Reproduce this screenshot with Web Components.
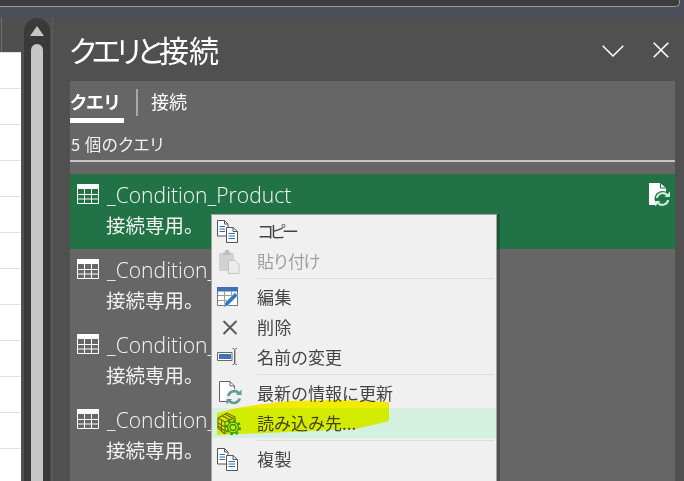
<!DOCTYPE html>
<html lang="ja"><head><meta charset="utf-8"><style>
html,body{margin:0;padding:0;background:#505050}
body{width:684px;height:481px;overflow:hidden;font-family:"Open Sans","Noto Sans CJK JP",sans-serif}
</style></head><body>
<x-app>
  <x-topbar></x-topbar>
  <x-main>
    <x-sheet></x-sheet>
    <x-scroll></x-scroll>
    <x-pane>
      <x-query active>_Condition_Product</x-query>
      <x-query>_Condition_</x-query>
      <x-query>_Condition_</x-query>
      <x-query>_Condition_</x-query>
    </x-pane>
  </x-main>
  <x-menu>
    <x-item icon="copy" style="letter-spacing:-4.500px">コピー</x-item>
    <x-item icon="paste" disabled style="letter-spacing:-1.500px">貼り付け</x-item>
    <x-sep></x-sep>
    <x-item icon="edit" style="letter-spacing:.500px">編集</x-item>
    <x-item icon="del" style="letter-spacing:.500px">削除</x-item>
    <x-item icon="rename">名前の変更</x-item>
    <x-sep></x-sep>
    <x-item icon="refresh">最新の情報に更新</x-item>
    <x-item icon="load" hover>読み込み先...</x-item>
    <x-sep></x-sep>
    <x-item icon="copy" style="letter-spacing:.500px">複製</x-item>
  </x-menu>
  <x-marker></x-marker>
</x-app>
<script>
const FONT='"Noto Sans CJK JP","Noto Sans",sans-serif';
function def(name,css,html,init){
  customElements.define(name,class extends HTMLElement{
    constructor(){super();const r=this.attachShadow({mode:'open'});
      r.innerHTML='<style>'+css+'</style>'+(typeof html==='function'?html(this):html);}
    connectedCallback(){if(init)init(this)}
  });
}
const ICONS={
 copy:`<svg width="21" height="23" viewBox="0 0 21 23" fill="none" style="margin-top:1px"><path d="M.5.5H7.500L11 4V16H.5Z" fill="#fff" stroke="#555"/><path d="M7.500 .5V4H11" stroke="#555"/><path d="M2.500 6.500H8M2.500 9H8M2.500 11.500H8" stroke="#2f6fb0"/><path d="M9.500 7.500H16L20.500 11.500V22.500H9.500Z" fill="#fff" stroke="#555"/><path d="M16 7.500V11.500H20.500" stroke="#555"/><path d="M11.500 13.500H18M11.500 16H18M11.500 18.500H18" stroke="#2f6fb0"/></svg>`,
 paste:`<svg width="22" height="24" viewBox="0 0 22 24" style="margin-left:1px;margin-top:1px"><path d="M1 3H16V21H1Z" fill="#d2d2d2"/><path d="M5 5V2.500H7V0H11V2.500H13V5Z" fill="#bdbdbd"/><path d="M10.500 10.500H17L21 14.500V23.500H10.500Z" fill="#ececec" stroke="#c4c4c4"/></svg>`,
 edit:`<svg width="22" height="22" viewBox="0 0 22 22" fill="none"><path d="M.5 1.500H20.500V19.500H.5Z" fill="#fff" stroke="#777"/><path d="M0 1H21V5.500H0Z" fill="#3f72ae"/><path d="M7.500 5V19M14.500 5V12M1 9.500H20M1 14.500H12" stroke="#999"/><path d="M6.500 21.500L8 16.500L18 6.500L21 9.500L11 19.500Z" fill="#2f78c4" stroke="#fff" stroke-width=".6"/></svg>`,
 del:`<svg width="16" height="15" viewBox="0 0 16 15" fill="none" style="margin-left:5px"><path d="M1.500 1L14.500 14M14.500 1L1.500 14" stroke="#5a5a5a" stroke-width="2"/></svg>`,
 rename:`<svg width="22" height="17" viewBox="0 0 22 17" fill="none" style="margin-top:-1px"><path d="M.5 4.500H15V12.500H.5Z" fill="#fff" stroke="#666"/><path d="M2 6H14V11H2Z" fill="#3f72ae"/><path d="M15.500 .5H17M20 .5H18.500M15.500 16.500H17M20 16.500H18.500" stroke="#666"/><path d="M17.750 1V16" stroke="#555" stroke-width="1.200"/></svg>`,
 refresh:`<svg width="23" height="24" viewBox="0 0 23 24" fill="none" style="margin-left:2px"><path d="M.5 .5H11L15.500 5V20.500H.5Z" fill="#fff" stroke="#666"/><path d="M11 .5V5H15.500" stroke="#666"/><circle cx="15" cy="16" r="8" fill="#f0f0f0"/><path d="M9.300 15A6 6 0 0 1 19.500 12M20.700 17.500A6 6 0 0 1 10.500 20" stroke="#5d9c94" stroke-width="2.600"/><path d="M17 14H22.500V8.500ZM13 18H7.500V23.500Z" fill="#5d9c94"/></svg>`,
 load:`<svg width="24" height="23" viewBox="0 0 24 23" fill="none"><path d="M1 6L10 1L18 5V9M1 6V16L8 22M1 6L8 10V22M8 10L17 6M1 11L8 15M1 14L8 19M5 3.500L13 8M8 2L16 6.500M4.500 8V19" stroke="#6b6a10" stroke-width="1.100"/><circle cx="16" cy="15.500" r="3" stroke="#2f9a2f" stroke-width="1.300"/><circle cx="16" cy="15.500" r="5.500" stroke="#2f9a2f" stroke-width="1.300"/><circle cx="16" cy="15.500" r="7" stroke="#2f9a2f" stroke-width="2" stroke-dasharray="2.600 2.900"/></svg>`
};
const TABLE=`<svg width="22" height="20" viewBox="0 0 22 20" fill="none" style="display:block"><path d="M0 0H22V5H0Z" fill="#fff"/><path d="M.5 .5H21.500V19.500H.5ZM.5 10.500H21.500M.5 15H21.500M7.500 5V19M14.500 5V19" stroke="#fff"/></svg>`;

def('x-app',`:host{display:block;position:relative;width:684px;height:481px;overflow:hidden;background:#505050;color:#fff;font-family:${FONT}}`,`<slot></slot>`);
def('x-topbar',`:host{display:block;height:18px;box-sizing:border-box;background:#4b4f59}
 div{height:6px;background:#3d3d3d;border-bottom:1px solid #9a9a9a;margin-right:4px;border-bottom-right-radius:5px;border-right:1px solid #9a9a9a}`,`<div></div>`);
def('x-main',`:host{display:flex;height:463px}`,`<slot></slot>`);
def('x-sheet',`:host{display:flex;flex-direction:column;width:21px;flex:none}
 .h{height:34px;background:#4f4f4f;border-left:1px solid #707070;margin-left:1px}
 .g{flex:1;background-color:#fff;background-image:repeating-linear-gradient(to bottom,#e2e2e2 0 1px,#fff 1px 36px)}`,`<div class="h"></div><div class="g"></div>`);
def('x-scroll',`:host{display:block;width:26px;flex:none;margin:0 2px 0 3px;background:#3a3a3a;border-radius:13px 13px 0 0;position:relative;padding-top:8px;box-sizing:content-box}
 .a{width:0;height:0;border:7px solid transparent;border-top:0;border-bottom:10px solid #c6c6c6;margin:0 auto}
 .t{width:12px;height:440px;margin:8px auto 0;background:#c6c6c6;border-radius:6px 6px 0 0}`,`<div class="a"></div><div class="t"></div>`);
def('x-pane',`:host{display:block;flex:1;min-width:0;border-left:1px solid #5e5e5e;padding:0 9px 0 17px;background:#505050}
 header{display:flex;align-items:center;height:63px}
 h1{margin:0;font:400 30px/1 ${FONT};color:#fff;flex:1;position:relative;top:-1px}
 h1 span{letter-spacing:-4.200px;font-feature-settings:"palt";margin-left:-1px}
 .btn{display:block;flex:none}
 .body{background:#666;height:400px}
 nav{display:flex;align-items:flex-start;height:42px}
 .tab{font:400 18px/1 ${FONT};font-feature-settings:"palt";padding-top:11px;height:37px;box-sizing:content-box}
 .on{font-weight:700;border-bottom:5px solid #fff;height:26px;width:54px;letter-spacing:.3px}
 .div{width:2px;height:27px;background:#a8a8a8;margin:8px 13px 0 12px}
 .count{font:400 16.500px/1 ${FONT};font-feature-settings:"palt";padding:13px 0 0 1px;height:24px;box-sizing:content-box;letter-spacing:.5px;color:#f2f2f2}
 hr{border:0;height:2px;background:#c6c6c6;margin:0 0 12px}`,
 `<header><h1><span>クエリと</span>接続</h1>
  <svg class="btn" width="22" height="12" viewBox="0 0 22 12" style="margin-right:29px;margin-top:3px"><path d="M.7 .7L11 11L21.300 .7" fill="none" stroke="#fff" stroke-width="1.500"/></svg>
  <svg class="btn" width="16" height="16" viewBox="0 0 16 16" style="margin-right:6px"><path d="M.7.7L15.300 15.300M15.300.7L.7 15.300" fill="none" stroke="#fff" stroke-width="1.600"/></svg>
 </header>
 <div class="body"><nav><div class="tab on">クエリ</div><div class="div"></div><div class="tab">接続</div></nav>
 <div class="count">5 個のクエリ</div><hr><slot></slot></div>`);
def('x-query',`:host{display:block;height:75px;position:relative;color:#fff}
 :host([active]){background:#217346}
 .l{display:flex;align-items:center;padding-left:7px;height:20px;padding-top:10px}
 .n{font:300 21.100px/1 "Open Sans",sans-serif;margin-left:8px;color:#f6f6f6;transform:translateY(1px)}
 .s{font:400 19.500px/1 ${FONT};margin:11px 0 0 36px;color:#f2f2f2}
 .d{display:none;position:absolute;right:5px;top:9px}
 :host([active]) .d{display:block}`,
 `<div class="l">${TABLE}<span class="n"><slot></slot></span></div><div class="s">接続専用。</div>
 <svg class="d" width="21" height="24" viewBox="0 0 21 24" fill="none"><path d="M0 0H11L17 5V22H0Z" fill="#fff"/><path d="M11.500 0V5H17" stroke="#217346"/><circle cx="13.500" cy="16" r="8" fill="#217346"/><path d="M7.800 15A6 6 0 0 1 18 12M19.200 17A6 6 0 0 1 9 20" stroke="#c9f0dc" stroke-width="2"/><path d="M15.500 14H21V8.500ZM11.500 18H6V23.500Z" fill="#c9f0dc"/></svg>`);
def('x-menu',`:host{display:block;position:absolute;left:211px;top:214px;width:286px;height:280px;box-sizing:border-box;background:#f0f0f0;border:1px solid #a3a3a3;padding-top:1px;box-shadow:3px 0 0 rgba(0,0,0,.22)}`,`<slot></slot>`);
def('x-sep',`:host{display:block;height:6px;position:relative}
 div{position:absolute;left:45px;right:2px;top:2px;height:1px;background:#dcdcdc}`,`<div></div>`);
def('x-item',`:host{display:flex;align-items:center;height:30px;font:400 17px/1 ${FONT};color:#444;position:relative}
 :host([disabled]){color:#a0a0a0}
 :host([hover]){background:#d3f0e0}
 .t{transform:translateY(-1px)}
 .i{width:45px;flex:none;display:flex;justify-content:flex-start;align-items:center;height:100%;box-sizing:border-box;padding-left:5px}`,
 el=>`<span class="i">${ICONS[el.getAttribute('icon')]||''}</span><span class="t"><slot></slot></span>`);
def('x-marker',`:host{display:block;position:absolute;left:217px;top:400px;width:172px;height:36px;mix-blend-mode:multiply;pointer-events:none}
 svg{display:block}`,`<svg width="172" height="36" viewBox="0 0 172 36"><path d="M0 13L20 8L38 5L71 1L121 0L172 2V21L160 24L138 29L71 32L0 35Z" fill="#fffa00"/></svg>`);
</script>
</body></html>
